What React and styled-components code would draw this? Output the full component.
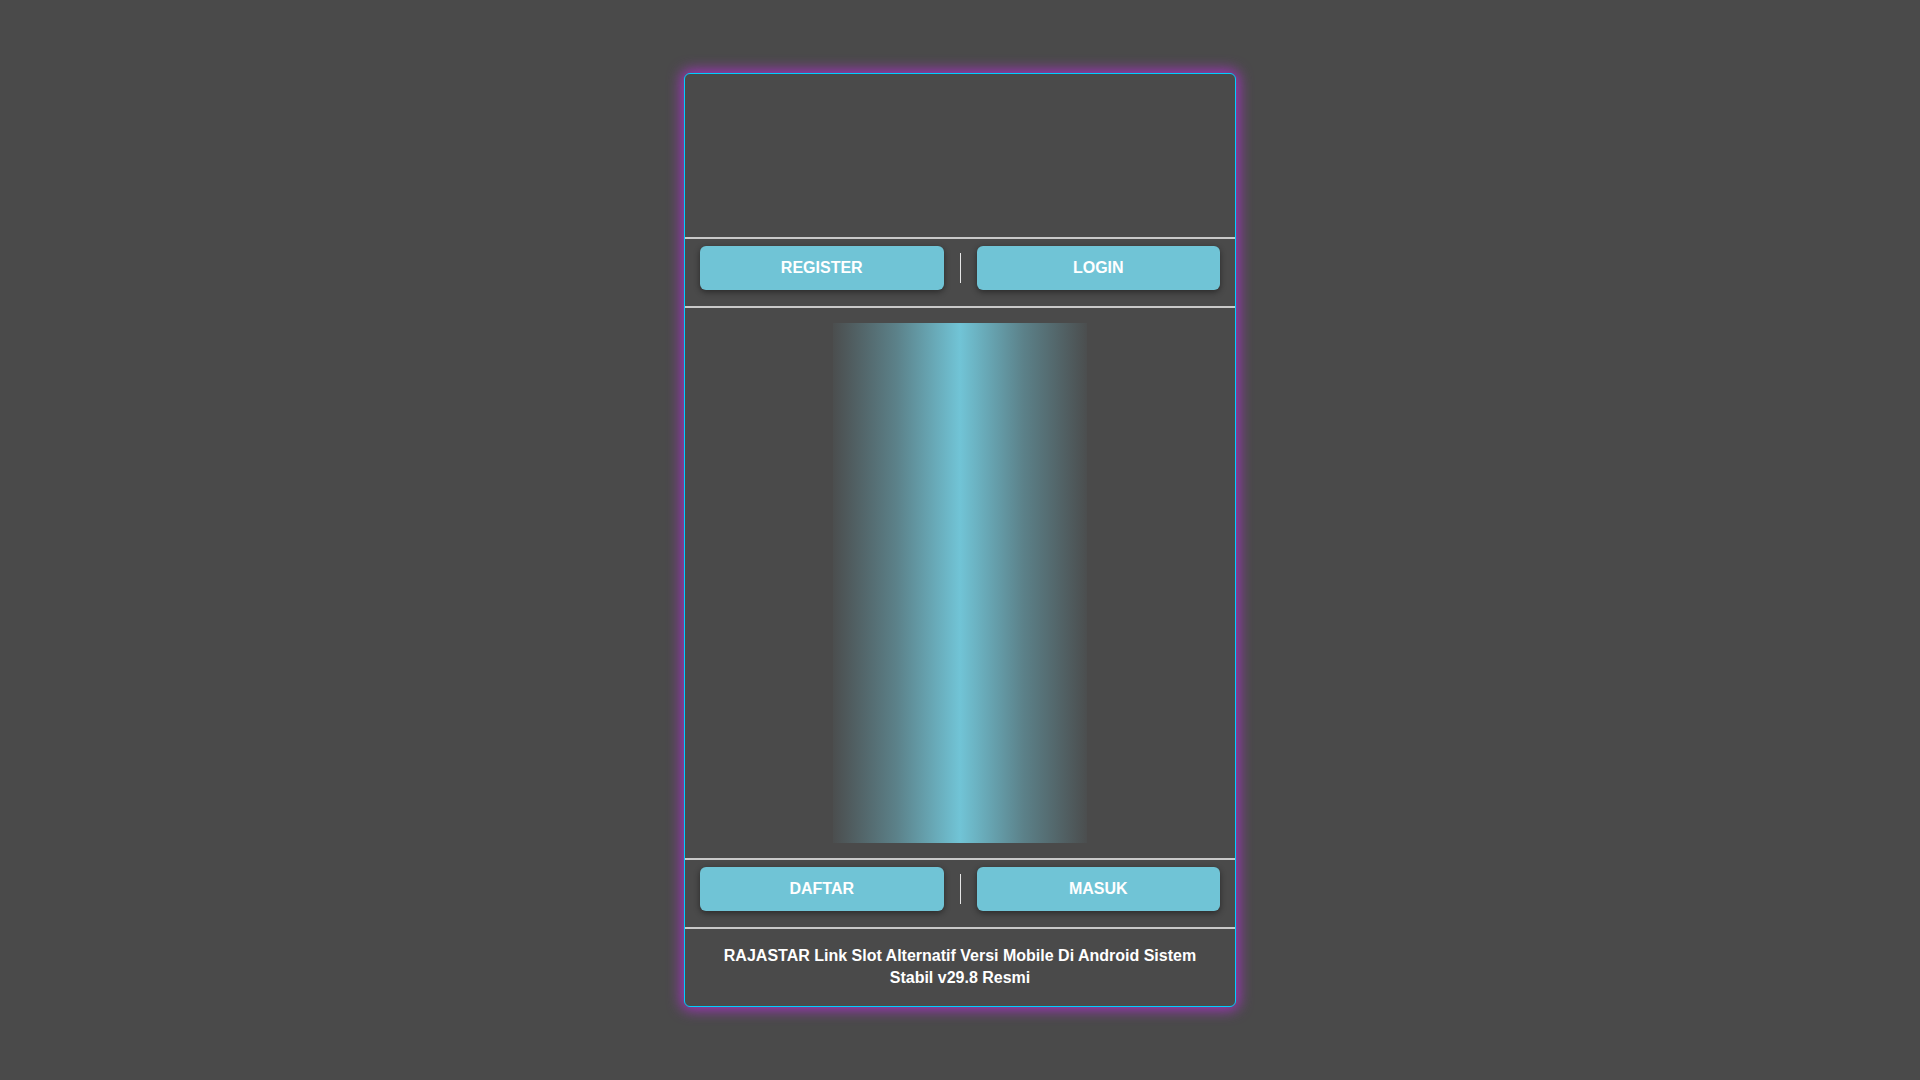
import React from 'react'
import styled, { createGlobalStyle } from 'styled-components'

const GlobalStyle = createGlobalStyle`
html, body {
    margin: 0;
    padding: 0;
    background: #4a4a4a;
    font-family: "Liberation Sans", Arial, sans-serif;
}
* {
    box-sizing: border-box;
}
`

const Page = styled.div`
padding: 73px 0 40px;
display: flex;
justify-content: center;
`

const Card = styled.div`
width: 552px;
background: #4a4a4a;
border: 1px solid #00cfff;
border-radius: 6px;
box-shadow: 0 0 14px 3px rgba(170, 50, 200, 0.9);
display: flex;
flex-direction: column;
overflow: hidden;
`

const Header = styled.div`
height: 163px;
`

const Divider = styled.div`
height: 2px;
background: #c9c9c9;
`

const NavRow = styled.div`
display: flex;
align-items: center;
gap: 16px;
padding: 7px 15px 16px;
`

const Button = styled.a`
flex: 1;
height: 44px;
display: flex;
align-items: center;
justify-content: center;
background: #70c4d6;
color: #ffffff;
font-size: 16px;
font-weight: 700;
border-radius: 6px;
box-shadow: 0 2px 6px rgba(0, 0, 0, 0.45);
text-decoration: none;
cursor: pointer;
`

const Sep = styled.span`
width: 1px;
height: 30px;
background: #e6e6e6;
`

const Banner = styled.div`
padding: 15px 0;
display: flex;
justify-content: center;
`

const Glow = styled.div`
width: 254px;
height: 520px;
background: linear-gradient(
    to right,
    rgba(113, 196, 214, 0.03) 0%,
    rgba(113, 196, 214, 0.45) 25%,
    #71c4d6 50%,
    rgba(113, 196, 214, 0.45) 75%,
    rgba(113, 196, 214, 0.03) 100%
);
`

const Caption = styled.h1`
margin: 0;
padding: 16px 16px 17px;
color: #ffffff;
font-size: 16px;
line-height: 22px;
font-weight: 700;
text-align: center;
`

const Nav = ({ left, right }) => (
    <NavRow>
        <Button>{left}</Button>
        <Sep />
        <Button>{right}</Button>
    </NavRow>
)

export default function App() {
    return (
        <>
            <GlobalStyle />
            <Page>
                <Card>
                    <Header />
                    <Divider />
                    <Nav left="REGISTER" right="LOGIN" />
                    <Divider />
                    <Banner>
                        <Glow />
                    </Banner>
                    <Divider />
                    <Nav left="DAFTAR" right="MASUK" />
                    <Divider />
                    <Caption>
                        RAJASTAR Link Slot Alternatif Versi Mobile Di Android Sistem Stabil v29.8 Resmi
                    </Caption>
                </Card>
            </Page>
        </>
    )
}
